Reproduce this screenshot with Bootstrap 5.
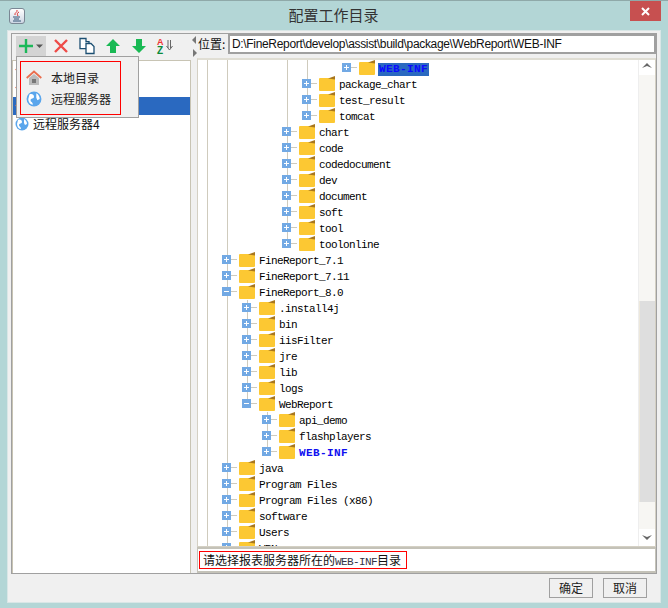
<!DOCTYPE html>
<html lang="zh"><head><meta charset="utf-8">
<link href="https://cdn.jsdelivr.net/npm/bootstrap@5.3.0/dist/css/bootstrap.min.css" rel="stylesheet">
<style>
html,body{height:100%;margin:0}
body{background:#b3d6d6;font:12px/16px "Liberation Sans","Noto Sans CJK SC",sans-serif;color:#111;overflow:hidden}
.win{height:608px;width:668px;position:relative;border-top:1px solid #8fa9a9}
.tbar{height:29px;padding:0 7px 0 9px}
.wtitle{font-size:15px;line-height:28px;flex:1;text-align:center;color:#333;padding-left:12px;font-family:"Noto Sans CJK SC",sans-serif}
.jicon{width:16px;height:16px;margin-top:7px;border:1px solid #7a8794;border-radius:3px;background:linear-gradient(#fff,#cdd6e4)}
.closex{width:31px;height:20px;background:#c75050;color:#fff}
.body-pane{margin:0 7px;height:573px;background:#f0f0f0;padding:2px 3px 0;border:1px solid #d9e6e6}
.outer{height:541px;border:1px solid #a0a0a0}
.leftp{width:179px}
.tool{height:26px;padding:2px 0 0 4px}
.tb{width:26px;height:20px}
.tb.add{width:30px;background:#d4d4d4;margin-right:2px}
.lst{flex:1;background:#fff;border:solid #c8c4b4;border-width:1px 1px 0 1px}
.lrow{height:18px;padding-left:2px;gap:4px;font-family:"Noto Sans CJK SC",sans-serif}
.lrow.on{background:#2a69c0}
.split{width:6px;padding-top:1px}
.rightp{flex:1;min-width:0}
.locbar{height:24px}
.loct{padding-left:1px;width:31px;line-height:20px;white-space:nowrap;font-family:"Noto Sans CJK SC",sans-serif}
.locin{flex:1;height:20px;border:2px solid #a0a0a0;background:#fff;padding:0 2px;line-height:16px;font-size:12px;letter-spacing:-.33px;white-space:nowrap}
.treeb{height:489px;position:relative;background:#fff;border:1px solid #d4d0c4;border-top:2px solid #e0ded4;overflow:hidden}
.tr{height:16px;font:11px/16px "Liberation Mono",monospace;letter-spacing:-.6px;white-space:nowrap;color:#000}
.d0{padding-left:24px}.d1{padding-left:44px}.d2{padding-left:64px}.d3{padding-left:84px}.d4{padding-left:104px}.d5{padding-left:144px}
.pm{width:9px;height:9px;background:#72a9e4;flex:none;position:relative;margin-top:-1px}
.pm::before{content:"";position:absolute;left:2px;right:2px;top:4px;height:1px;background:#fff}
.pm.p::after{content:"";position:absolute;top:2px;bottom:2px;left:4px;width:1px;background:#fff}
.cn{width:6px;height:1px;background:#cfcbbd;margin-right:2px;flex:none;margin-top:-1px}
.fold{flex:none;margin-right:4px;margin-top:-1px}
.tx{margin-top:2px}
.hl{background:#2a69c0;color:#0a0aff;padding:0 1px;margin-left:-1px;font-weight:bold;line-height:13px;letter-spacing:.4px}
.bl{color:#1010f0;font-weight:bold;letter-spacing:.4px}
.vl{position:absolute;width:1px;background:#cfcbbd}
.sb{position:absolute;right:0;top:-2px;bottom:0;width:17px;background:#f7f6f3;border-left:1px solid #eee}
.sbth{position:absolute;left:0;right:0;top:243px;height:201px;background:#dedede;border-left:1px solid #ede8dc}
.arrb{position:absolute;left:0;right:0;height:17px;background:#fff}
.hint{height:26px;background:#fff;border:solid #c4c2b8;border-width:2px 1px 2px 1px;padding:2px 0 0 1px}
.hintb{border:1px solid #f00;height:18px;width:208px;line-height:16px;display:block;padding-left:3px;white-space:nowrap;font-family:"Noto Sans CJK SC",sans-serif}
.hintb i{font:11px "Liberation Mono",monospace;letter-spacing:-.6px;color:#334}
.foot{height:27px;gap:10px;padding:4px 10px 0 0}
.wbtn{width:44px;height:20px;border:1px solid #a0a0a0;text-align:center;line-height:18px;color:#222;font-family:"Noto Sans CJK SC",sans-serif}
.menu-pop{position:absolute;left:16px;top:55px;width:123px;height:62px;background:#f0f0f0;border:1px solid #a0a0a0;padding:4px 3px}
.redb{border:1px solid #f00;height:54px;width:101px;padding:5px 0 0 5px;font-family:"Noto Sans CJK SC",sans-serif}
.mrow{height:21px;gap:9px;color:#222}
</style></head><body>
<svg width="0" height="0" class="d-block"><defs>
<symbol id="home" viewBox="0 0 16 16"><path d="M.7 8L8 1.500 15.300 8" fill="none" stroke="#ea6e4e" stroke-width="1.800"/><path d="M3 8l5-4 5 4v7H3z" fill="#bbb"/><rect x="6" y="9" width="4" height="4" fill="#777"/></symbol>
<symbol id="globe" viewBox="0 0 14 14"><circle cx="7" cy="7" r="6.500" fill="#5aa6ec"/><path d="M3 3c2-1 4 0 4 2s-3 1-3 3 2 1 2 4c-2 0-4-2-4-5zM9 2c2 1 3 3 3 5l-2 1-1-2z" fill="#fff"/></symbol>
</defs></svg>
<div class="win d-flex flex-column">
<div class="tbar d-flex">
<div class="jicon d-flex align-items-center justify-content-center"><svg width="12" height="13" viewBox="0 0 12 13"><path d="M6 0c1 2-3 3-2 5M8 2c-2 1-2 2-1 4" stroke="#d33" fill="none"/><path d="M2 7h7M3 9h5M2 11h8" stroke="#357" fill="none"/></svg></div>
<div class="wtitle">配置工作目录</div>
<div class="closex d-flex align-items-center justify-content-center"><svg width="9" height="9" viewBox="0 0 9 9"><path d="M1 1l7 7M8 1l-7 7" stroke="#fff" stroke-width="2"/></svg></div>
</div>
<div class="body-pane">
<div class="outer d-flex">
<div class="leftp d-flex flex-column">
<div class="tool d-flex align-items-start">
<div class="tb add d-flex align-items-center"><svg width="30" height="20" viewBox="0 0 30 20"><path d="M3 10h14M10 3v14" stroke="#1bb858" stroke-width="2.400"/><path d="M20 8.500h7l-3.500 3.500z" fill="#555"/></svg></div>
<div class="tb d-flex align-items-center justify-content-center"><svg width="16" height="16" viewBox="0 0 16 16"><path d="M2 2l12 12M14 2L2 14" stroke="#ee4b48" stroke-width="2.400"/></svg></div>
<div class="tb d-flex align-items-center justify-content-center"><svg width="18" height="18" viewBox="0 0 18 18"><path d="M2 1.500h6v3l3 .1v7H2z" fill="#fff" stroke="#1c4f72" stroke-width="1.300"/><path d="M8 6.500h5l3 3v7H8z" fill="#fff" stroke="#1c4f72" stroke-width="1.300"/></svg></div>
<div class="tb d-flex align-items-center justify-content-center"><svg width="16" height="16" viewBox="0 0 16 16"><path d="M8 1l7 7h-4v7H5V8H1z" fill="#19b954"/></svg></div>
<div class="tb d-flex align-items-center justify-content-center"><svg width="16" height="16" viewBox="0 0 16 16"><path d="M8 15l7-7h-4V1H5v7H1z" fill="#19b954"/></svg></div>
<div class="tb d-flex align-items-center justify-content-center"><svg width="18" height="18" viewBox="0 0 18 18"><text x="1" y="8" font-size="9" font-weight="bold" font-family="Liberation Sans" fill="#e33">A</text><text x="1" y="17" font-size="10" font-weight="bold" font-family="Liberation Sans" fill="#0a8a3a">Z</text><path d="M12 3v8M14.500 3v8M10.500 9l3 4 3-4" stroke="#666" fill="none"/></svg></div>
</div>
<div class="lst">
<div class="lrow d-flex align-items-center"><svg width="14" height="14"><use href="#home"/></svg></div>
<div class="lrow d-flex align-items-center"><svg width="14" height="14"><use href="#home"/></svg></div>
<div class="lrow on d-flex align-items-center"><svg width="14" height="14"><use href="#home"/></svg></div>
<div class="lrow d-flex align-items-center"><svg width="14" height="14"><use href="#globe"/></svg><span>远程服务器4</span></div>
</div>
</div>
<div class="split d-flex flex-column align-items-center"><svg width="5" height="22" viewBox="0 0 5 22"><path d="M4 1v8L0 5zM1 14v8l4-4z" fill="#777"/></svg></div>
<div class="rightp d-flex flex-column">
<div class="locbar d-flex">
<div class="loct">位置:</div>
<div class="locin">D:\FineReport\develop\assist\build\package\WebReport\WEB-INF</div>
</div>
<div class="treeb">
<div class="vl" style="left:9px;top:0;bottom:0"></div>
<div class="vl" style="left:29px;top:0;bottom:0"></div>
<div class="vl" style="left:89px;top:0;height:184px"></div>
<div class="vl" style="left:109px;top:0;height:56px"></div>
<div class="vl" style="left:49px;top:240px;height:104px"></div>
<div class="vl" style="left:69px;top:352px;height:40px"></div>
<div id="t"></div>
<div class="sb"><div class="sbth"></div>
<div class="arrb" style="top:0"><svg class="d-block" width="16" height="17" viewBox="0 0 16 17"><path d="M3 10l5-5 5 5-5-2z" fill="#666"/></svg></div>
<div class="arrb" style="bottom:0"><svg class="d-block" width="16" height="17" viewBox="0 0 16 17"><path d="M3 6l5 5 5-5-5 2z" fill="#666"/></svg></div>
</div>
</div>
<div class="hint"><span class="hintb">请选择报表服务器所在的<i>WEB-INF</i>目录</span></div>
</div>
</div>
<div class="foot d-flex justify-content-end">
<div class="wbtn">确定</div><div class="wbtn">取消</div>
</div>
</div>
<div class="menu-pop">
<div class="redb">
<div class="mrow d-flex align-items-center"><svg width="16" height="16"><use href="#home"/></svg><span>本地目录</span></div>
<div class="mrow d-flex align-items-center"><svg width="16" height="16"><use href="#globe"/></svg><span>远程服务器</span></div>
</div>
</div>
</div>
<script>
var rows=[[5,'p','WEB-INF','hl'],[4,'p','package_chart'],[4,'p','test_result'],[4,'p','tomcat'],[3,'p','chart'],[3,'p','code'],[3,'p','codedocument'],[3,'p','dev'],[3,'p','document'],[3,'p','soft'],[3,'p','tool'],[3,'p','toolonline'],[0,'p','FineReport_7.1'],[0,'p','FineReport_7.11'],[0,'m','FineReport_8.0'],[1,'p','.install4j'],[1,'p','bin'],[1,'p','iisFilter'],[1,'p','jre'],[1,'p','lib'],[1,'p','logs'],[1,'m','WebReport'],[2,'p','api_demo'],[2,'p','flashplayers'],[2,'p','WEB-INF','bl'],[0,'p','java'],[0,'p','Program Files'],[0,'p','Program Files (x86)'],[0,'p','software'],[0,'p','Users'],[0,'p','VPN']];
var h='';
rows.forEach(function(r){h+='<div class="tr d-flex align-items-center d'+r[0]+'"><span class="pm '+r[1]+'"></span><span class="cn"></span><svg class="fold" width="16" height="15" viewBox="0 0 16 15"><rect y="2" width="16" height="13" rx="1" fill="#fcc833"/><path d="M9 2.500l7-2.500v3.500z" fill="#a8771f"/></svg><span class="tx '+(r[3]||'')+'">'+r[2]+'</span></div>'});
document.getElementById('t').innerHTML=h;
</script>
</body></html>
